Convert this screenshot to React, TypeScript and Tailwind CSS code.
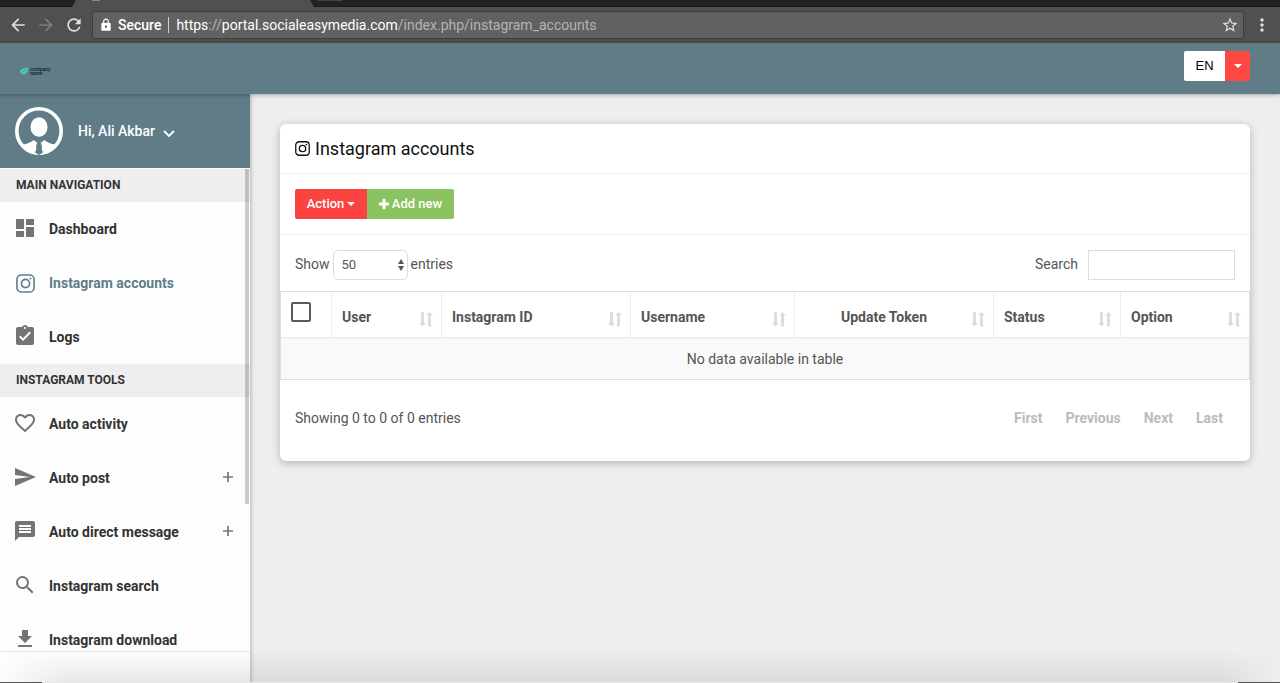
import React from "react";
import {
  MdArrowBack,
  MdArrowForward,
  MdAssignmentTurnedIn,
  MdDashboard,
  MdFavoriteBorder,
  MdFileDownload,
  MdLock,
  MdMessage,
  MdMoreVert,
  MdRefresh,
  MdSearch,
  MdSend,
  MdStarBorder,
} from "react-icons/md";

type IconProps = { className?: string };

function InstagramIcon({ className }: IconProps) {
  return (
    <svg viewBox="0 0 20 20" className={className} fill="none" stroke="currentColor" aria-hidden="true">
      <rect x="1" y="1" width="18" height="18" rx="4.500" strokeWidth="1.7" />
      <circle cx="10" cy="10" r="4.3" strokeWidth="1.7" />
      <circle cx="15.2" cy="4.8" r="1.1" fill="currentColor" stroke="none" />
    </svg>
  );
}

function Caret({ className }: IconProps) {
  return (
    <svg viewBox="0 0 8 4" className={className} fill="currentColor" aria-hidden="true">
      <path d="M0 0h8L4 4z" />
    </svg>
  );
}

function SortArrows() {
  return (
    <svg viewBox="0 0 14 15" className="h-[15px] w-[14px] shrink-0 text-[#dddddd]" fill="currentColor" aria-hidden="true">
      <path d="M2 0h3v11h2L3.500 14.500 0 11h2z" />
      <path d="M9 14.500h3v-11h2L10.500 0 7 3.500h2z" />
    </svg>
  );
}

function BrowserChrome() {
  return (
    <div className="shrink-0 bg-[#505050]">
      <div className="flex h-[7px] justify-between border-b border-[#191a1b] bg-[#202224]">
        <svg viewBox="0 0 280 7" className="ml-[72px] h-[7px] w-[280px]" aria-hidden="true">
          <path d="M4 0h234l4 7H0z" fill="#505050" />
          <rect x="20" y="0" width="8" height="1" fill="#7da32f" />
          <rect x="246" y="0" width="24" height="1" fill="#444" />
        </svg>
      </div>
      <div className="flex h-9 items-center pr-2 pl-2 text-[#e0e0e0]">
        <button type="button" aria-label="Back" className="w-5">
          <MdArrowBack className="size-5" />
        </button>
        <button type="button" aria-label="Forward" className="ml-2 w-5 text-[#7c7c7c]">
          <MdArrowForward className="size-5" />
        </button>
        <button type="button" aria-label="Reload" className="ml-2 w-5">
          <MdRefresh className="size-5" />
        </button>
        <div className="ml-2 flex h-7 flex-1 items-center rounded-[3px] border border-[#3d3d3d] bg-[#616161] px-1 font-['Roboto',sans-serif] text-sm">
          <MdLock className="ml-0.5 size-3.5 text-white" />
          <span className="ml-[5px] font-medium text-white">Secure</span>
          <span className="mx-[7px] h-4 w-px bg-[#d0d0d0]" />
          <span className="flex-1 text-[#b4b4b4]">
            <span className="text-white">https</span>://<span className="text-white">portal.socialeasymedia.com</span>
            /index.php/instagram_accounts
          </span>
          <button type="button" aria-label="Bookmark">
            <MdStarBorder className="size-[18px]" />
          </button>
        </div>
        <button type="button" aria-label="Browser menu" className="ml-2">
          <MdMoreVert className="size-5" />
        </button>
      </div>
    </div>
  );
}

function Header() {
  return (
    <header className="z-10 flex h-[51px] shrink-0 items-center justify-between bg-[#607d87] pr-[30px] pl-5 shadow-[0_1px_4px_rgba(0,0,0,0.3)]">
      <a href="#home" className="mt-1 flex items-center gap-px text-[#152228]">
        <svg viewBox="0 0 9 8" className="h-2 w-[9px]" aria-hidden="true">
          <path d="M3 1.500 8 0l-.5 4.500L4.500 7.500H2L0 5V3.500z" fill="#45cdb4" />
          <path d="M2.500 5.500 6 2" stroke="#2d9385" strokeWidth=".7" />
        </svg>
        <span className="font-['Roboto',sans-serif] text-[5px] leading-[4px] font-medium">
          company
          <br />
          name
        </span>
      </a>
      <div className="mb-[5px] flex h-[30px] overflow-hidden rounded-[2px]">
        <button type="button" className="w-[41px] bg-white font-['Liberation_Sans',sans-serif] text-[13px] text-black">
          EN
        </button>
        <button type="button" aria-label="Choose language" className="flex w-[25px] items-center justify-center bg-[#ff4744] text-white">
          <Caret className="h-1 w-2" />
        </button>
      </div>
    </header>
  );
}

type NavItem = {
  label: string;
  icon: React.ComponentType<IconProps>;
  active?: boolean;
  expandable?: boolean;
};

const mainItems: NavItem[] = [
  { label: "Dashboard", icon: MdDashboard },
  { label: "Instagram accounts", icon: InstagramIcon, active: true },
  { label: "Logs", icon: MdAssignmentTurnedIn },
];

const toolItems: NavItem[] = [
  { label: "Auto activity", icon: MdFavoriteBorder },
  { label: "Auto post", icon: MdSend, expandable: true },
  { label: "Auto direct message", icon: MdMessage, expandable: true },
  { label: "Instagram search", icon: MdSearch },
  { label: "Instagram download", icon: MdFileDownload },
];

function NavGroup({ title, items }: { title: string; items: NavItem[] }) {
  return (
    <section>
      <h2 className="bg-[#eeeeee] px-4 pt-[7px] pb-2 text-xs leading-[18px] font-bold text-[#333]">{title}</h2>
      <ul>
        {items.map(({ label, icon: Icon, active, expandable }) => (
          <li key={label}>
            <a
              href="#nav"
              className={
                active
                  ? "flex h-[54px] items-center gap-3 pr-4 pl-[13px] text-[#607d8b]"
                  : "flex h-[54px] items-center gap-3 pr-4 pl-[13px] text-[#333]"
              }
            >
              <span className={active ? "flex w-6 justify-center" : "flex w-6 justify-center text-[#747474]"}>
                <Icon className={active ? "size-[19px]" : "mb-0.5 size-6"} />
              </span>
              <span className="flex-1">{label}</span>
              {expandable && (
                <svg viewBox="0 0 12 12" className="mb-0.5 size-3 text-[#757575]" stroke="currentColor" strokeWidth="1.700" aria-hidden="true">
                  <path d="M1 6h10M6 1v10" />
                </svg>
              )}
            </a>
          </li>
        ))}
      </ul>
    </section>
  );
}

function Sidebar() {
  return (
    <aside className="z-[5] flex w-[250px] shrink-0 flex-col bg-[#fdfdfd] shadow-[1px_0_4px_rgba(0,0,0,0.25)]">
      <button type="button" className="flex h-[74px] shrink-0 items-center bg-[#607d87] px-[15px] text-sm font-medium text-white">
        <svg viewBox="0 0 48 48" className="size-12" aria-hidden="true">
          <circle cx="24" cy="24" r="22.200" fill="none" stroke="#fff" strokeWidth="3.600" />
          <ellipse cx="24" cy="20" rx="8.500" ry="9.800" fill="#fff" />
          <path d="M6 38c4-1 9-1.500 12.500-5l4 3-1.500 3.500 1.500 8.300C14 47 9 43 6 38z" fill="#fff" />
          <path d="M42 38c-4-1-9-1.500-12.500-5l-4 3 1.500 3.500-1.500 8.300C34 47 39 43 42 38z" fill="#fff" />
          <path d="M22.300 36h3.400l1 3-1 1 2.300 5.500-4 2.500-4-2.500L22.300 40l-1-1z" fill="#607d87" />
        </svg>
        <span className="ml-[15px]">Hi, Ali Akbar</span>
        <svg viewBox="0 0 12 8" className="mt-1.5 ml-2 h-2 w-3" fill="none" stroke="currentColor" strokeWidth="1.800" aria-hidden="true">
          <path d="m1 1 5 5 5-5" />
        </svg>
      </button>
      <div className="relative min-h-0 flex-1">
        <nav className="h-full overflow-hidden pt-px text-sm font-bold">
          <NavGroup title="MAIN NAVIGATION" items={mainItems} />
          <NavGroup title="INSTAGRAM TOOLS" items={toolItems} />
        </nav>
        <div className="absolute top-px right-px h-[335px] w-1 bg-black/20" />
      </div>
      <div className="h-8 shrink-0 border-t border-[#e9e9e9]" />
    </aside>
  );
}

const columns = [
  { label: "User", width: "w-[110px]", align: "text-left" },
  { label: "Instagram ID", width: "w-[189px]", align: "text-left" },
  { label: "Username", width: "w-[164px]", align: "text-left" },
  { label: "Update Token", width: "w-[199px]", align: "text-center" },
  { label: "Status", width: "w-[127px]", align: "text-left" },
  { label: "Option", width: "w-[128px]", align: "text-left" },
];

function AccountsTable() {
  return (
    <table className="w-full table-fixed border-separate border-spacing-0 border border-[#dddddd]">
      <colgroup>
        <col className="w-[51px]" />
        {columns.map((c) => (
          <col key={c.label} className={c.width} />
        ))}
      </colgroup>
      <thead>
        <tr className="h-[47px]">
          <th className="border-r border-b-2 border-[#eeeeee] p-0 pl-2.5 text-left">
            <input
              type="checkbox"
              aria-label="Select all accounts"
              className="mb-1.5 block size-5 appearance-none rounded-[2px] border-2 border-[#5a5a5a]"
            />
          </th>
          {columns.map((c) => (
            <th key={c.label} className="border-r border-b-2 border-[#eeeeee] p-0 pt-1 pr-2 pl-2.5 last:border-r-0">
              <div className="flex items-center gap-2">
                <span className={`flex-1 ${c.align}`}>{c.label}</span>
                <span className="mt-1.5">
                  <SortArrows />
                </span>
              </div>
            </th>
          ))}
        </tr>
      </thead>
      <tbody>
        <tr className="h-10 bg-[#f9f9f9]">
          <td colSpan={7} className="p-0 text-center">
            No data available in table
          </td>
        </tr>
      </tbody>
    </table>
  );
}

function AccountsCard() {
  return (
    <section className="rounded-md bg-white pb-[33px] shadow-[0_2px_8px_rgba(0,0,0,0.25)]">
      <h1 className="flex h-[50px] items-center gap-[5px] border-b border-[#eeeeee] px-[15px] text-lg text-[#111]">
        <InstagramIcon className="size-[15px]" />
        Instagram accounts
      </h1>
      <div className="flex border-b border-[#eeeeee] px-[15px] py-[15px] text-[13px] font-medium text-white">
        <button type="button" className="flex h-[30px] w-[72px] items-center justify-center gap-[3px] rounded-l-[2px] bg-[#fb4341]">
          Action
          <Caret className="h-1 w-2" />
        </button>
        <button type="button" className="flex h-[30px] w-[87px] items-center justify-center gap-[3px] rounded-r-[2px] bg-[#8bc360]">
          <svg viewBox="0 0 10 10" className="size-2.5" fill="currentColor" aria-hidden="true">
            <path d="M3.500 0h3v3.500H10v3H6.500V10h-3V6.500H0v-3h3.500z" />
          </svg>
          Add new
        </button>
      </div>
      <div className="flex items-center justify-between px-[15px] pt-[15px] pb-[11px]">
        <div className="flex items-center gap-[3px]">
          <label htmlFor="page-size" className="pb-0.5">
            Show
          </label>
          <span className="relative">
            <select
              id="page-size"
              className="block h-[30px] w-[75px] appearance-none rounded-[5px] border border-[#dddddd] bg-white px-2 text-[13px]"
            >
              <option>50</option>
            </select>
            <svg viewBox="0 0 6 12" className="pointer-events-none absolute top-[9px] right-1 h-3 w-1.5" fill="#555" aria-hidden="true">
              <path d="M0 5h6L3 0zM0 7h6l-3 5z" />
            </svg>
          </span>
          <span className="pb-0.5">entries</span>
        </div>
        <div className="flex items-center gap-2.5">
          <label htmlFor="table-search" className="pb-0.5">
            Search
          </label>
          <input id="table-search" type="search" className="h-[30px] w-[147px] border border-[#dddddd] px-2 outline-none" />
        </div>
      </div>
      <AccountsTable />
      <div className="flex items-center justify-between px-[15px] pt-7">
        <span>Showing 0 to 0 of 0 entries</span>
        <div className="flex gap-[23px] pr-3 font-bold text-[#bbbbbb]">
          <button type="button">First</button>
          <button type="button">Previous</button>
          <button type="button">Next</button>
          <button type="button">Last</button>
        </div>
      </div>
    </section>
  );
}

export default function App() {
  return (
    <div className="relative flex h-screen flex-col overflow-hidden bg-[#eeeeee]">
      <BrowserChrome />
      <Header />
      <div className="flex min-h-0 flex-1 font-['Roboto',sans-serif] text-sm leading-5 text-[#555]">
        <Sidebar />
        <main className="min-w-0 flex-1 px-[30px] pt-[30px]">
          <AccountsCard />
        </main>
      </div>
      <div className="pointer-events-none absolute inset-x-0 bottom-0 z-20">
        <div className="h-8 bg-linear-to-b from-transparent to-black/8 mask-x-from-95%" />
        <div className="h-px bg-[#555]">
          <div className="mx-[42px] h-px bg-[#e8e8e8]" />
        </div>
      </div>
    </div>
  );
}
